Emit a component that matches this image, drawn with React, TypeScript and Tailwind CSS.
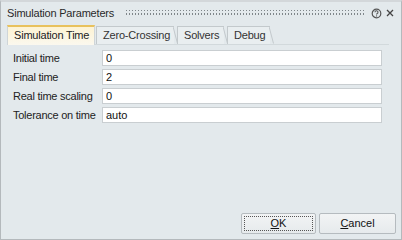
import { useState } from "react";

const TABS = [
  { label: "Simulation Time", width: "w-[88px]" },
  { label: "Zero-Crossing", width: "w-[78px]" },
  { label: "Solvers", width: "w-[47px]" },
  { label: "Debug", width: "w-[43px]" },
];

const FIELDS = [
  { label: "Initial time", value: "0" },
  { label: "Final time", value: "2" },
  { label: "Real time scaling", value: "0" },
  { label: "Tolerance on time", value: "auto" },
];

function Grip() {
  return (
    <svg className="flex-1 h-[7px] ml-[12px] mr-[6px]" preserveAspectRatio="none">
      <defs>
        <pattern id="dots" width="3" height="4" patternUnits="userSpaceOnUse">
          <rect x="0" y="0" width="1" height="1" fill="#7f868a" />
          <rect x="0" y="3" width="1" height="1" fill="#7f868a" />
        </pattern>
      </defs>
      <rect width="100%" height="5" fill="url(#dots)" />
    </svg>
  );
}

export default function App() {
  const [active, setActive] = useState(0);

  return (
    <div
      className="w-[402px] h-[240px] bg-[#e3e9ec] border border-t-2 border-[#b4b9bc] border-t-[#d3d7da] flex flex-col text-[#1e1e1e]"
      style={{ fontFamily: '"Liberation Sans", Arial, sans-serif' }}
    >
      {/* Title bar */}
      <div className="h-[20px] flex items-center pl-[6px] pr-[6px] pt-[2px]">
        <span className="text-[11px] tracking-[-0.2px] text-[#2a2a2a]">Simulation Parameters</span>
        <Grip />
        <svg width="11" height="11" viewBox="0 0 11 11" className="mr-[3px]">
          <circle cx="5.5" cy="5.5" r="4.3" fill="none" stroke="#555" strokeWidth="1.2" />
          <path d="M4 4.3a1.5 1.5 0 1 1 2 1.4c-.4.2-.5.4-.5.9" fill="none" stroke="#555" strokeWidth="1.1" />
          <rect x="5" y="7.4" width="1.1" height="1.1" fill="#555" />
        </svg>
        <svg width="10" height="10" viewBox="0 0 10 10">
          <path d="M2 2l6 6M8 2l-6 6" stroke="#444" strokeWidth="1.3" />
        </svg>
      </div>

      {/* Tabs */}
      <div className="flex items-end h-[21px] pl-[6px] mt-[1px] relative">
        {TABS.map((t, i) => {
          const isActive = i === active;
          return (
            <button
              key={t.label}
              type="button"
              onClick={() => setActive(i)}
              className={
                isActive
                  ? `relative z-10 ${t.width} h-[20px] pl-[6px] text-left mr-[1px] text-[11px] tracking-[-0.2px] text-[#222] border-x border-t-2 border-[#cfd5d8] border-t-[#e8c15c] bg-gradient-to-b from-[#fdf3d3] to-[#fbf8ee] -mb-px pb-px`
                  : `relative ${t.width} h-[18px] pl-[6px] text-left mr-[3px] text-[11px] tracking-[-0.2px] text-[#333] border-l border-t border-[#c3c9cc] bg-[#e9eef0]`
              }
            >
              {t.label}
              {!isActive && (
                <svg className="absolute -right-[4px] top-[-1px] w-[5px] h-[18px]" viewBox="0 0 5 18" preserveAspectRatio="none">
                  <path d="M0 0.5L4.5 17.5" stroke="#c3c9cc" strokeWidth="1" />
                </svg>
              )}
            </button>
          );
        })}
      </div>

      {/* Panel */}
      <div className="flex-1 flex flex-col ml-[6px] mr-[12px] border-t border-[#d2d9dc]">
        <div className="flex flex-col gap-[3px] pt-[5px] pl-[6px]">
          {FIELDS.map((f) => (
            <div key={f.label} className="flex items-center h-[16px]">
              <span className="w-[89px] text-[11px] tracking-[-0.25px] text-[#222] whitespace-nowrap">{f.label}</span>
              <input
                readOnly
                value={f.value}
                className="w-[280px] h-[16px] bg-white border border-[#c9ced1] px-[3px] text-[11px] text-[#111] outline-none"
              />
            </div>
          ))}
        </div>
      </div>

      {/* Buttons */}
      <div className="flex justify-end gap-[3px] pr-[5px] pb-[5px]">
        <button
          type="button"
          className="w-[75px] h-[21px] border border-[#b5bbbf] rounded-[2px] bg-gradient-to-b from-[#f2f4f5] to-[#e6eaec] p-[2px]"
        >
          <span className="flex items-center justify-center h-full border border-dotted border-[#555] text-[11px] text-[#111]">
            <span className="underline underline-offset-1">O</span>K
          </span>
        </button>
        <button
          type="button"
          className="w-[77px] h-[21px] border border-[#b5bbbf] rounded-[2px] bg-gradient-to-b from-[#f2f4f5] to-[#e6eaec] text-[11px] text-[#111]"
        >
          <span className="underline underline-offset-1">C</span>ancel
        </button>
      </div>
    </div>
  );
}
